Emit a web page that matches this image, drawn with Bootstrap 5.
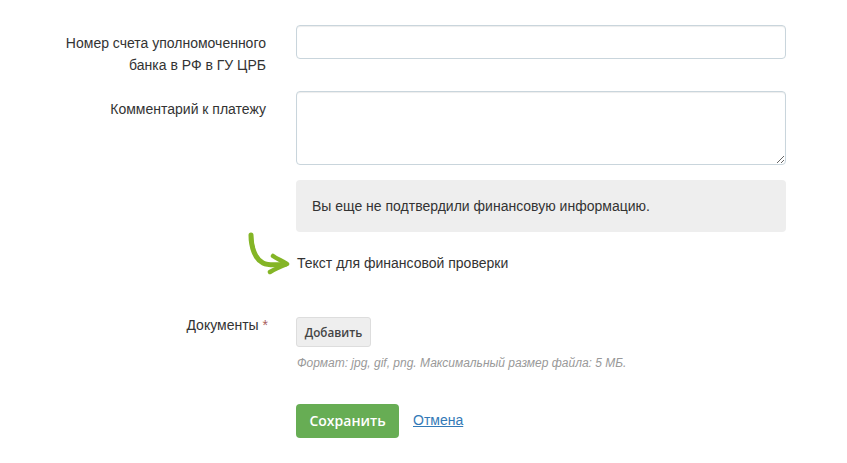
<!DOCTYPE html>
<html lang="ru"><head><meta charset="utf-8">
<link href="https://cdn.jsdelivr.net/npm/bootstrap@5.3.0/dist/css/bootstrap.min.css" rel="stylesheet">
<style>
html,body{height:463px;overflow:hidden}
body{background:#fff;font-family:"Liberation Sans",Arial,sans-serif;font-size:14px;line-height:22px;color:#333}
.pagewrap{padding:25px 0 0 50px;width:786px}
.frow{display:flex;gap:30px}
.flabel{width:216px;flex:none;text-align:right;padding-top:7px;margin:0;color:#333}
.flabel.docs{padding-top:0;margin-top:-3px;width:218px;margin-right:-2px;align-self:flex-start}
.ffield{flex:1;min-width:0}
.form-control.ctl{border-color:#c9d5dc;border-radius:4px;height:34px;box-shadow:inset 0 1px 1px rgba(0,0,0,.075);padding:6px 12px;font-size:14px}
textarea.form-control.ctl{height:74px;min-height:74px}
.r2{margin-top:15px}
.infobox{background:#eee;border-radius:4px;height:52px;margin-top:15px;padding:15px 15px 15px 16px;line-height:22px;color:#333}
.fintext{position:relative;margin-top:20px;height:22px;line-height:22px;padding-left:1px}
.arrowsvg{position:absolute;left:-50px;top:-20px}
.r3{margin-top:43px}
.addbtn{width:75px;height:30px;padding:0;background:#eee;border:1px solid #ddd;border-radius:3px;font-family:"Open Sans",sans-serif;font-size:11.7px;font-weight:600;line-height:28px;color:#444}
.hint{margin-top:5px;font-size:12px;font-style:italic;color:#999;line-height:22px;padding-left:1px}
.r4{margin-top:30px;align-items:center}
.savebtn{width:103px;height:34px;padding:0;background:#67ad54;border:none;border-radius:4px;color:#fff;font-family:"Open Sans",sans-serif;font-weight:600;font-size:14px;line-height:34px}
.cancel{margin-left:14px;margin-bottom:2px;color:#337ab7}
.req{color:#a9605e}
</style></head><body>
<form class="pagewrap">
  <div class="frow">
    <label class="flabel">Номер счета уполномоченного банка в РФ в ГУ ЦРБ</label>
    <div class="ffield"><input type="text" class="form-control ctl"></div>
  </div>
  <div class="frow r2">
    <label class="flabel">Комментарий к платежу</label>
    <div class="ffield"><textarea class="form-control ctl"></textarea></div>
  </div>
  <div class="frow">
    <div class="flabel"></div>
    <div class="ffield">
      <div class="infobox">Вы еще не подтвердили финансовую информацию.</div>
      <div class="fintext">
        <svg class="arrowsvg" width="46" height="46" viewBox="0 0 46 46" fill="none" stroke="#84b526" stroke-linecap="round" stroke-linejoin="round"><path d="M5 3 C5 15 9 27 17 31 C23 34 32 33 40 32" stroke-width="5"/><path d="M27 24 C31 27 37 29 41 32 C36 34 29 37 24 40" stroke-width="4.5"/></svg>
        Текст для финансовой проверки
      </div>
    </div>
  </div>
  <div class="frow r3">
    <label class="flabel docs">Документы <span class="req">*</span></label>
    <div class="ffield">
      <button type="button" class="btn addbtn">Добавить</button>
      <div class="hint">Формат: jpg, gif, png. Максимальный размер файла: 5 МБ.</div>
    </div>
  </div>
  <div class="frow r4">
    <div class="flabel"></div>
    <div class="ffield d-flex align-items-center">
      <button type="button" class="btn savebtn">Сохранить</button>
      <a href="#" class="cancel">Отмена</a>
    </div>
  </div>
</form>
<script src="https://cdn.jsdelivr.net/npm/bootstrap@5.3.0/dist/js/bootstrap.bundle.min.js"></script>
</body></html>
